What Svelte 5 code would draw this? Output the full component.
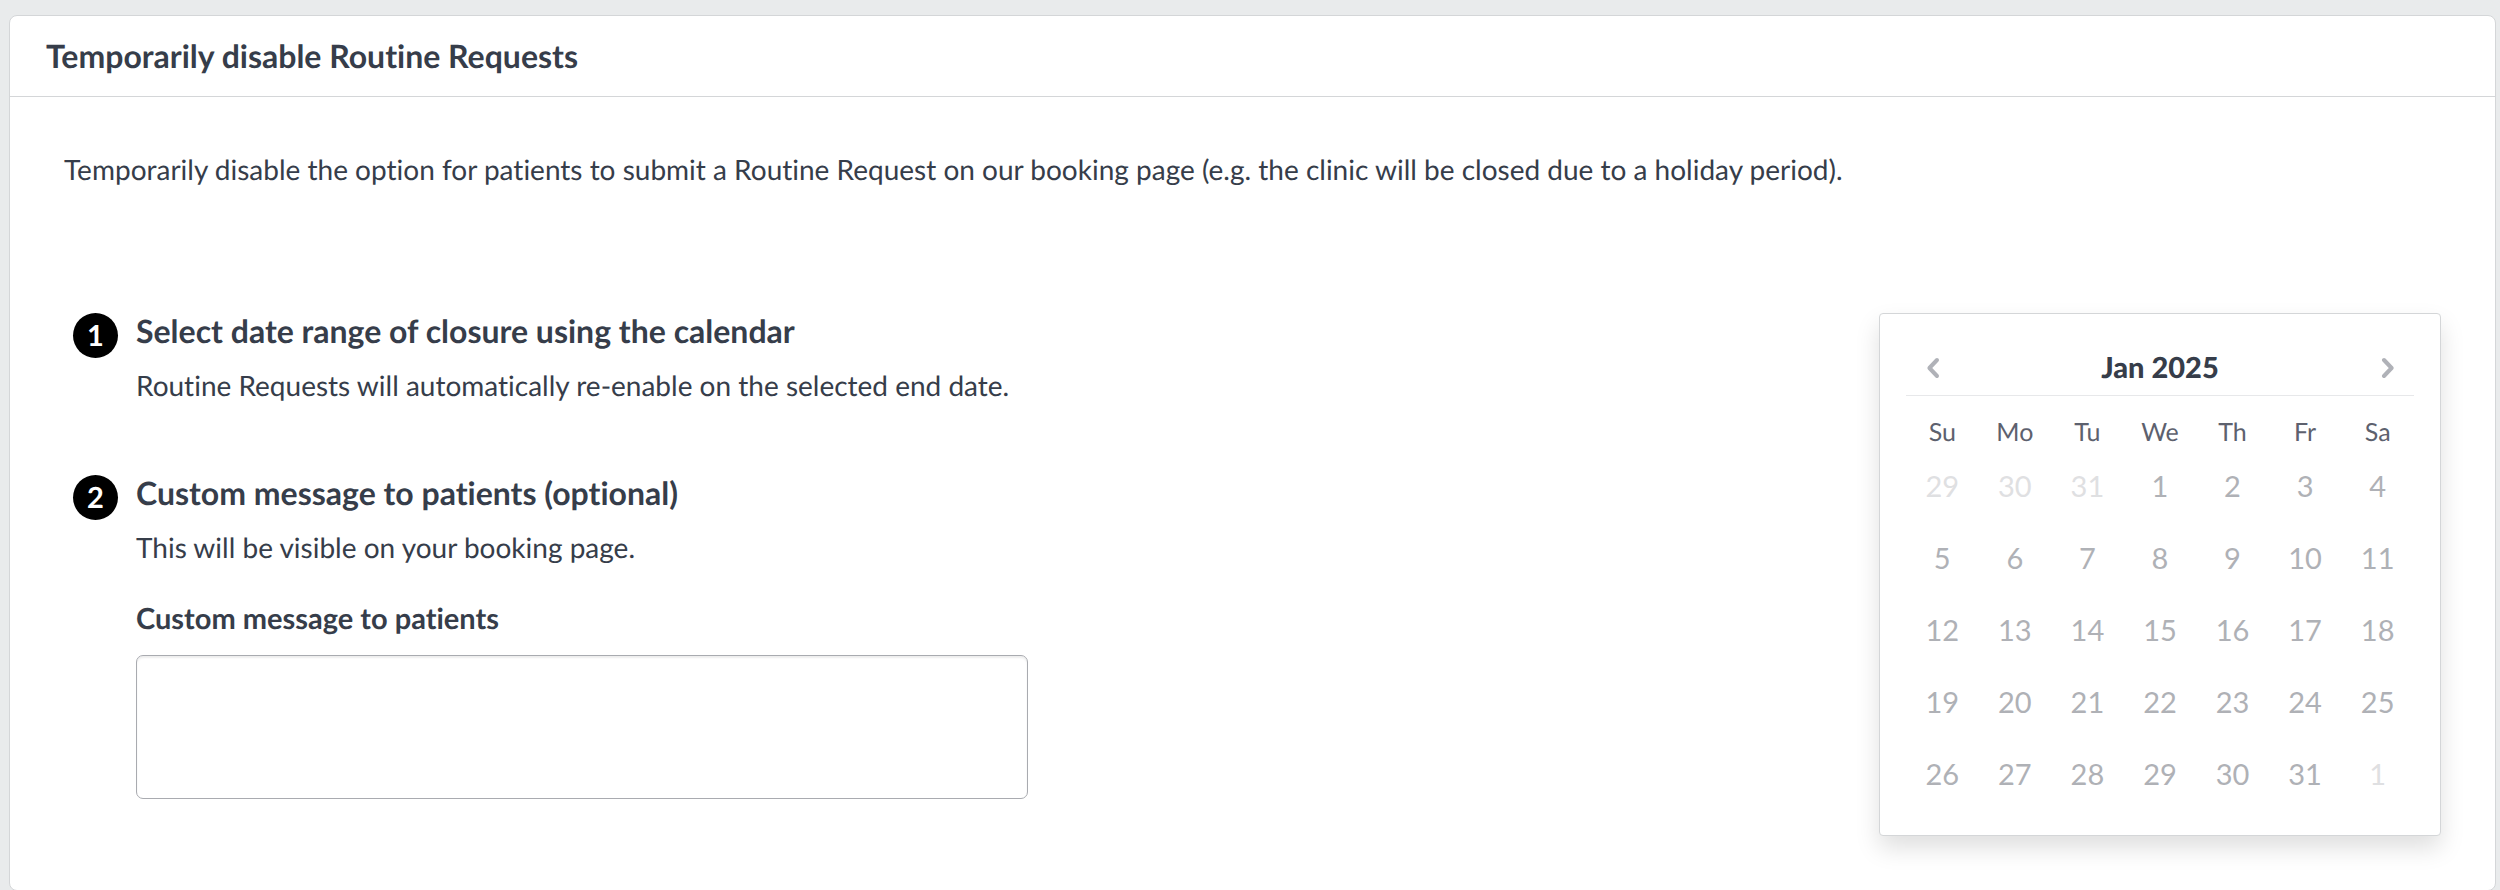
<script lang="ts">
	type Day = {
		label: number;
		outside: boolean;
	};

	const weekdays = ['Su', 'Mo', 'Tu', 'We', 'Th', 'Fr', 'Sa'];
	const monthNames = ['Jan', 'Feb', 'Mar', 'Apr', 'May', 'Jun', 'Jul', 'Aug', 'Sep', 'Oct', 'Nov', 'Dec'];

	let year = $state(2025);
	let month = $state(0);
	let message = $state('');

	let weeks = $derived.by(() => {
		const offset = new Date(year, month, 1).getDay();
		const count = new Date(year, month + 1, 0).getDate();
		const rows: Day[][] = [];

		for (let start = 0; start < offset + count; start += 7) {
			rows.push(
				weekdays.map((_, i) => {
					const date = new Date(year, month, start + i - offset + 1);
					return { label: date.getDate(), outside: date.getMonth() !== month };
				})
			);
		}

		return rows;
	});

	function shiftMonth(step: number) {
		const next = new Date(year, month + step, 1);
		year = next.getFullYear();
		month = next.getMonth();
	}
</script>

<main class="page">
	<section class="card">
		<header class="card-header">
			<h1>Temporarily disable Routine Requests</h1>
		</header>

		<div class="card-body">
			<p>
				Temporarily disable the option for patients to submit a Routine Request on our booking page (e.g. the clinic will be closed due to a holiday period).
			</p>

			<div class="columns">
				<div class="steps">
					<div class="step">
						<span class="badge">1</span>
						<div class="step-content">
							<h2>Select date range of closure using the calendar</h2>
							<p>Routine Requests will automatically re-enable on the selected end date.</p>
						</div>
					</div>

					<div class="step">
						<span class="badge">2</span>
						<div class="step-content">
							<h2>Custom message to patients (optional)</h2>
							<p>This will be visible on your booking page.</p>
							<label for="custom-message">Custom message to patients</label>
							<textarea id="custom-message" bind:value={message}></textarea>
						</div>
					</div>
				</div>

				<div class="calendar">
					<div class="calendar-nav">
						<button type="button" class="nav-button" aria-label="Previous month" onclick={() => shiftMonth(-1)}>
							<svg width="14" height="22" viewBox="0 0 14 22" fill="none" stroke="currentColor" stroke-width="4" stroke-linecap="round" stroke-linejoin="round">
								<path d="M11 3 3.4 11l7.6 8" />
							</svg>
						</button>
						<span class="month">{monthNames[month]} {year}</span>
						<button type="button" class="nav-button" aria-label="Next month" onclick={() => shiftMonth(1)}>
							<svg width="14" height="22" viewBox="0 0 14 22" fill="none" stroke="currentColor" stroke-width="4" stroke-linecap="round" stroke-linejoin="round">
								<path d="m4 3 7.6 8L4 19" />
							</svg>
						</button>
					</div>

					<table>
						<thead>
							<tr>
								{#each weekdays as weekday}
									<th scope="col">{weekday}</th>
								{/each}
							</tr>
						</thead>
						<tbody>
							{#each weeks as week}
								<tr>
									{#each week as day}
										<td>
											<button type="button" class="day" class:outside={day.outside} disabled>{day.label}</button>
										</td>
									{/each}
								</tr>
							{/each}
						</tbody>
					</table>
				</div>
			</div>
		</div>
	</section>
</main>

<style>
	:global(body) {
		background: #e9ebec;
	}

	.page {
		padding: 15px 4px 0 9px;
		color: #363d4a;
		font-family: Lato, sans-serif;
		font-size: 29px;
		font-variant-ligatures: none;
		line-height: 36px;
		text-rendering: geometricPrecision;
	}

	.card {
		background: #fff;
		border: 1px solid #d4d6d8;
		border-radius: 8px;
	}

	.card-header {
		padding: 20px 36px;
		border-bottom: 1px solid #d4d6d8;
	}

	h1,
	h2,
	p {
		margin: 0;
	}

	h1,
	h2 {
		font-size: 32px;
		font-weight: 700;
	}

	h1 {
		line-height: 40px;
	}

	p {
		font-size: 28px;
	}

	.card-body {
		padding: 54px;
	}

	.columns {
		display: flex;
		justify-content: space-between;
		align-items: flex-start;
		margin-top: 126px;
	}

	.steps {
		display: flex;
		flex-direction: column;
		gap: 72px;
		padding-left: 9px;
	}

	.step {
		display: flex;
		align-items: flex-start;
		gap: 18px;
	}

	.badge {
		display: flex;
		align-items: center;
		justify-content: center;
		flex-shrink: 0;
		width: 45px;
		height: 45px;
		border-radius: 50%;
		background: #000;
		color: #fff;
		font-weight: 700;
	}

	.step-content p {
		margin-top: 18px;
	}

	label {
		display: block;
		margin-top: 36px;
		font-weight: 700;
	}

	textarea {
		display: block;
		box-sizing: border-box;
		width: 892px;
		height: 144px;
		margin-top: 18px;
		padding: 12px 16px;
		border: 1px solid #a9abb0;
		border-radius: 7px;
		background: #fff;
		box-shadow: inset 0 2px 2px rgba(0, 0, 0, 0.07);
		color: inherit;
		font: inherit;
		resize: none;
	}

	.calendar {
		box-sizing: border-box;
		flex-shrink: 0;
		width: 562px;
		padding: 26px 26px 25px;
		border: 1px solid #d4d6d8;
		border-radius: 4px;
		background: #fff;
		box-shadow: 0 12px 24px rgba(0, 0, 0, 0.13);
	}

	.calendar-nav {
		display: flex;
		align-items: center;
		justify-content: space-between;
		height: 55px;
		border-bottom: 1px solid #e7e8ea;
	}

	.nav-button {
		display: flex;
		padding: 0 20px;
		border: none;
		background: none;
		color: #b0b2b8;
		cursor: pointer;
	}

	.month {
		font-weight: 900;
	}

	table {
		width: 100%;
		margin-top: 18px;
		border-collapse: collapse;
		table-layout: fixed;
	}

	th,
	td {
		padding: 0;
		text-align: center;
	}

	th {
		height: 36px;
		color: #5d616e;
		font-size: 25px;
		font-weight: 400;
	}

	.day {
		display: block;
		width: 100%;
		height: 72px;
		padding: 0;
		border: none;
		background: none;
		color: #afb1b6;
		font: inherit;
	}

	.day.outside {
		color: #dfe0e2;
	}
</style>
